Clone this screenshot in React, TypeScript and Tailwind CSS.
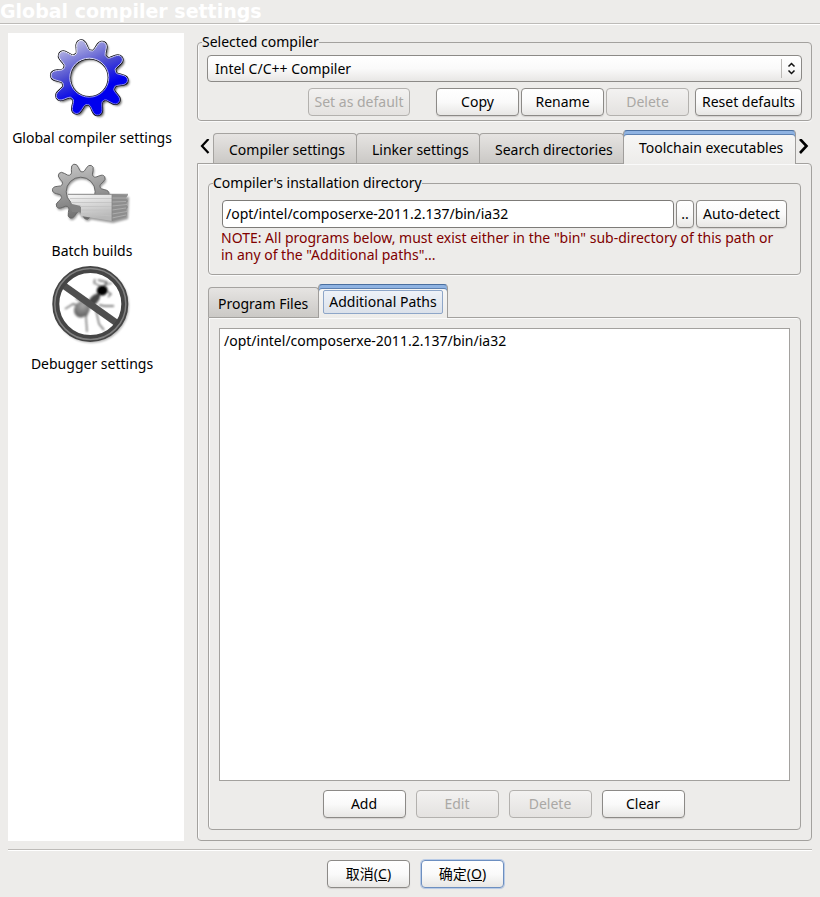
import { useState } from "react";
import type { ReactNode } from "react";
import clsx from "clsx";

// Builds a closed gear outline with rounded teeth
const gearPath = (cx: number, cy: number, outer: number, root: number, teeth: number, offset: number) => {
  const pts: [number, number][] = [];
  const step = 360 / teeth;
  for (let i = 0; i < teeth; i++) {
    const base = offset + i * step;
    const shape = [
      [-0.5, root],
      [-0.34, root],
      [-0.17, outer + 1],
      [0.17, outer + 1],
      [0.34, root],
    ];
    shape.forEach(([f, r]) => {
      const a = ((base + f * step) * Math.PI) / 180;
      pts.push([cx + r * Math.cos(a), cy + r * Math.sin(a)]);
    });
  }
  const mid = (a: [number, number], b: [number, number]) =>
    `${((a[0] + b[0]) / 2).toFixed(2)} ${((a[1] + b[1]) / 2).toFixed(2)}`;
  let d = `M${mid(pts[pts.length - 1], pts[0])}`;
  pts.forEach((p, i) => {
    d += `Q${p[0].toFixed(2)} ${p[1].toFixed(2)} ${mid(p, pts[(i + 1) % pts.length])}`;
  });
  return d + "Z";
};

const hole = (cx: number, cy: number, r: number) =>
  `M${cx - r} ${cy}a${r} ${r} 0 1 0 ${2 * r} 0a${r} ${r} 0 1 0 ${-2 * r} 0Z`;

const BLUE_GEAR = gearPath(37.3, 40.7, 37.5, 27, 10, 4) + hole(37.3, 40.7, 19.5);
const GREY_GEAR = gearPath(28.7, 41.7, 27.5, 20, 10, 4) + hole(28.7, 41.7, 14.5);

const GearIcon = () => (
  <svg className="size-20 overflow-visible" viewBox="0 0 80 80" aria-hidden="true">
    <defs>
      <linearGradient id="blueGear" x1="0.25" y1="0.05" x2="0.6" y2="0.85">
        <stop offset="0" stopColor="#b9b9e4" />
        <stop offset="0.45" stopColor="#4c4cd0" />
        <stop offset="0.8" stopColor="#0000ee" />
      </linearGradient>
      <linearGradient id="gearRim" x1="0.2" y1="0" x2="0.7" y2="1">
        <stop offset="0" stopColor="#ffffff" />
        <stop offset="0.5" stopColor="#c6c6f4" />
        <stop offset="1" stopColor="#5a5af2" />
      </linearGradient>
      <filter id="gearShadow" x="-20%" y="-20%" width="140%" height="140%">
        <feGaussianBlur stdDeviation="1.3" />
      </filter>
    </defs>
    <path d={BLUE_GEAR} fillRule="evenodd" fill="#000" opacity="0.6" filter="url(#gearShadow)" transform="translate(2 2)" />
    <path d={BLUE_GEAR} fillRule="evenodd" fill="none" stroke="#101018" strokeWidth="2.4" />
    <path d={BLUE_GEAR} fillRule="evenodd" fill="url(#blueGear)" stroke="url(#gearRim)" strokeWidth="1" />
  </svg>
);

const BatchIcon = () => (
  <svg className="size-20 overflow-visible" viewBox="0 0 80 80" aria-hidden="true">
    <defs>
      <linearGradient id="greyGear" x1="0.3" y1="0" x2="0.5" y2="1">
        <stop offset="0" stopColor="#c4c4c4" />
        <stop offset="0.5" stopColor="#9a9a9a" />
        <stop offset="1" stopColor="#6c6c6c" />
      </linearGradient>
      <linearGradient id="pageFront" x1="0" y1="0" x2="0.3" y2="1">
        <stop offset="0" stopColor="#f6f6f6" />
        <stop offset="1" stopColor="#b8b8b8" />
      </linearGradient>
      <filter id="batchShadow" x="-20%" y="-20%" width="140%" height="140%">
        <feGaussianBlur stdDeviation="1.2" />
      </filter>
    </defs>
    <g opacity="0.4" filter="url(#batchShadow)" transform="translate(1 2)">
      <path d={GREY_GEAR} fillRule="evenodd" />
      <path d="M17 45h59l-1 22-15 4-31-5z" />
    </g>
    <path d={GREY_GEAR} fillRule="evenodd" fill="url(#greyGear)" stroke="#686868" strokeWidth="1" />
    <path d="M17 51H32V62H20Z" fill="#828282" />
    <path d="M16 44.300H60V71L29 66V56L20 54Z" fill="url(#pageFront)" />
    <path d="M18 48.500H60M19 52.500H60M28 56.500H60M29 60H60M29 63.500L60 66" stroke="#c2c2c2" strokeWidth="0.8" />
    <path d="M60 44.300L76 45L74 48L76 51L74 54L76 57L74 60L75 63L74 67L60 71Z" fill="#8e8e8e" />
    <path d="M60 48L75 48M60 52L74 51.500M60 56L75 54.500M60 60L74 58M60 64L75 61.500M60 68L74 65" stroke="#b4b4b4" strokeWidth="0.8" />
    <path d="M16 44.300H76" stroke="#858585" strokeWidth="1" />
    <path d="M60 45V71" stroke="#858585" strokeWidth="0.8" />
  </svg>
);

const DebuggerIcon = () => (
  <svg className="size-20 overflow-visible" viewBox="0 0 80 80" aria-hidden="true">
    <defs>
      <radialGradient id="abdomen" cx="0.4" cy="0.3" r="0.8">
        <stop offset="0" stopColor="#aaa" />
        <stop offset="1" stopColor="#555" />
      </radialGradient>
      <filter id="antSoft" x="-20%" y="-20%" width="140%" height="140%">
        <feGaussianBlur stdDeviation="0.8" />
      </filter>
      <filter id="ringSoft" x="-20%" y="-20%" width="140%" height="140%">
        <feGaussianBlur stdDeviation="0.6" />
      </filter>
    </defs>
    <circle cx="39.500" cy="42.500" r="37.500" fill="#000" opacity="0.3" filter="url(#antSoft)" />
    <circle cx="38.300" cy="41" r="35" fill="#fff" />
    <g filter="url(#antSoft)">
      <path
        d="M36 41L30 37L24 36M30 43L21 41L13 46M37 45L34 54L35 69M44 47L47 61L52 67M47 42L53 43L62 43M50 24L42 20L43 16M52 23L55 19L46 17M55 28L59 31L56 34M53 22L60 20"
        fill="none"
        stroke="#606060"
        strokeWidth="1.300"
      />
      <ellipse cx="30" cy="46" rx="7.500" ry="9" transform="rotate(35 30 46)" fill="url(#abdomen)" />
      <ellipse cx="42" cy="37" rx="4" ry="8" transform="rotate(42 42 37)" fill="#444" />
      <ellipse cx="50" cy="27.500" rx="5.500" ry="5" transform="rotate(-20 50 27)" fill="#000" />
    </g>
    <g filter="url(#ringSoft)">
      <path d="M11 22L66 61" stroke="#505050" strokeWidth="7" />
      <circle cx="38.300" cy="41" r="34.500" fill="none" stroke="#444" strokeWidth="7" />
      <circle cx="38.300" cy="41" r="35.500" fill="none" stroke="#808080" strokeWidth="1.500" />
    </g>
  </svg>
);

interface PushButtonProps {
  children: ReactNode;
  className?: string;
  disabled?: boolean;
  primary?: boolean;
}

const PushButton = ({ children, className, disabled, primary }: PushButtonProps) => (
  <button
    type="button"
    disabled={disabled}
    className={clsx(
      "h-7 shrink-0 rounded border whitespace-nowrap",
      disabled
        ? "border-[#b3b1ae] bg-linear-to-b from-[#f3f2f1] to-[#e4e2e0] text-[#aaa8a5]"
        : "bg-linear-to-b from-white via-[#fafafa] to-[#e8e7e5] text-black shadow-[0_1px_1px_#d4d2d0]",
      !disabled && (primary ? "border-[#6d8fc0] ring-1 ring-[#b9cbe6]" : "border-[#8c8a87]"),
      className ?? "w-[83px]"
    )}
  >
    {children}
  </button>
);

interface TabProps {
  label: string;
  active: boolean;
  focused?: boolean;
  className: string;
  onClick: () => void;
}

const Tab = ({ label, active, focused, className, onClick }: TabProps) => (
  <button
    type="button"
    role="tab"
    aria-selected={active}
    onClick={onClick}
    className={clsx(
      "-mr-px flex shrink-0 items-center rounded-t border border-b-0 whitespace-nowrap",
      active
        ? "z-10 h-[34px] border-[#9f9d9b] border-t-[#4a6f9f] bg-linear-to-b from-[#f8f8f7] to-[#edecea] shadow-[inset_0_3px_0_#8fb3e2,inset_0_4px_0_#5c80b0]"
        : "mb-px h-[30px] border-[#a5a3a0] bg-linear-to-b from-[#e6e4e2] to-[#cbc9c6] pt-0.5",
      className
    )}
  >
    {focused ? (
      <span className="rounded-xs border border-[#8ea6c8] bg-linear-to-b from-[#eef2f8] to-[#dbe1ea] px-[5px] py-0.5">
        {label}
      </span>
    ) : (
      label
    )}
  </button>
);

const sections = [
  { label: "Global compiler settings", icon: <GearIcon /> },
  { label: "Batch builds", icon: <BatchIcon /> },
  { label: "Debugger settings", icon: <DebuggerIcon /> },
];

const compilerTabs = ["Compiler settings", "Linker settings", "Search directories", "Toolchain executables"];
const tabWidths = ["w-36", "w-[124px]", "w-[145px]", "w-[173px]"];

const group = "min-w-0 rounded border border-[#a3a19e] px-1 shadow-[inset_1px_0_0_#fafafa,0_1px_0_#fafafa]";
const pane = "flex flex-1 flex-col rounded-b rounded-tr border border-[#a3a19e] p-2.5 shadow-[inset_1px_1px_0_#fafafa]";

const App = () => {
  const [tab, setTab] = useState(3);
  const [subTab, setSubTab] = useState(1);
  const [path, setPath] = useState("/opt/intel/composerxe-2011.2.137/bin/ia32");

  return (
    <div className="flex min-h-screen flex-col bg-[#edecea] font-['Noto_Sans','Noto_Sans_CJK_SC',sans-serif] text-[14px] leading-[18px] text-black">
      <header className="h-6 border-b border-[#bdbbb8] shadow-[0_1px_0_white]">
        <h1 className="font-['DejaVu_Sans',sans-serif] text-[19px] leading-[22px] font-bold text-white">
          Global compiler settings
        </h1>
      </header>

      <div className="flex flex-1 gap-[13px] px-2 pt-[9px] pb-2">
        <nav className="flex w-44 shrink-0 flex-col gap-[3px] bg-white pt-1 pr-2">
          {sections.map((s) => (
            <button key={s.label} type="button" className="flex flex-col items-center gap-3 whitespace-nowrap">
              {s.icon}
              <span>{s.label}</span>
            </button>
          ))}
        </nav>

        <main className="flex min-w-0 flex-1 flex-col">
          <fieldset className={group}>
            <legend>Selected compiler</legend>
            <div className="px-[5px] pt-1 pb-1">
              <div className="relative">
                <select
                  aria-label="Selected compiler"
                  className="h-[27px] w-full appearance-none rounded border border-[#8c8a87] bg-linear-to-b from-white via-[#fafafa] to-[#e8e7e5] px-[7px]"
                >
                  <option>Intel C/C++ Compiler</option>
                </select>
                <svg
                  className="pointer-events-none absolute top-1 right-0 h-5 w-[21px]"
                  viewBox="0 0 21 20"
                  fill="none"
                  aria-hidden="true"
                >
                  <path d="M0.500 0V19" stroke="#bbb9b6" />
                  <path d="M7.500 7.500L10.500 4.500L13.500 7.500M7.500 11.500L10.500 14.500L13.500 11.500" stroke="#111" strokeWidth="1.500" />
                </svg>
              </div>
              <div className="mt-1.5 flex justify-end gap-0.5">
                <PushButton className="mr-6 w-[102px]" disabled>
                  Set as default
                </PushButton>
                <PushButton>Copy</PushButton>
                <PushButton>Rename</PushButton>
                <PushButton disabled>Delete</PushButton>
                <PushButton className="ml-1 w-[107px]">Reset defaults</PushButton>
              </div>
            </div>
          </fieldset>

          <div className="relative z-10 mt-[9px] -mb-px flex items-end">
            <button type="button" aria-label="Previous tab" className="h-[34px] w-4 shrink-0">
              <svg className="size-4" viewBox="0 0 16 16" fill="none" aria-hidden="true">
                <path d="M11.500 0L5 7L11.500 14" stroke="#000" strokeWidth="2.200" />
              </svg>
            </button>
            <div role="tablist" className="flex items-end">
              {compilerTabs.map((label, i) => (
                <Tab
                  key={label}
                  label={label}
                  active={tab === i}
                  className={clsx("pl-[15px]", tabWidths[i])}
                  onClick={() => setTab(i)}
                />
              ))}
            </div>
            <button type="button" aria-label="Next tab" className="h-[34px] w-4 shrink-0">
              <svg className="size-4" viewBox="0 0 16 16" fill="none" aria-hidden="true">
                <path d="M5 0L11.500 7L5 14" stroke="#000" strokeWidth="2.600" />
              </svg>
            </button>
          </div>

          <section className={pane}>
            <fieldset className={group}>
              <legend>Compiler&apos;s installation directory</legend>
              <div className="px-2 pt-2 pb-2.5">
                <div className="flex gap-0.5 px-px">
                  <input
                    type="text"
                    aria-label="Compiler's installation directory"
                    value={path}
                    onChange={(e) => setPath(e.target.value)}
                    className="h-7 min-w-0 flex-1 rounded border border-[#7d7b78] bg-white px-[3px] pb-0.5"
                  />
                  <PushButton className="w-[18px]">..</PushButton>
                  <PushButton className="w-[91px]">Auto-detect</PushButton>
                </div>
                <p className="pt-px pb-px leading-[17px] text-[#800000]">
                  NOTE: All programs below, must exist either in the "bin" sub-directory of this path or in any of the
                  "Additional paths"...
                </p>
              </div>
            </fieldset>

            <div role="tablist" className="relative z-10 mt-[9px] -mb-px flex items-end">
              <Tab
                label="Program Files"
                active={subTab === 0}
                className="w-[111px] pl-[9px]"
                onClick={() => setSubTab(0)}
              />
              <Tab
                label="Additional Paths"
                active={subTab === 1}
                focused={subTab === 1}
                className="w-[130px] justify-center"
                onClick={() => setSubTab(1)}
              />
            </div>

            <div className={pane}>
              <ul role="listbox" aria-label="Additional paths" className="flex-1 border border-[#a3a19e] bg-white px-1 py-[3px]">
                <li role="option" aria-selected={false}>
                  {path}
                </li>
              </ul>
              <div className="mt-[9px] mb-px flex justify-center gap-2.5 pr-0.5">
                <PushButton>Add</PushButton>
                <PushButton disabled>Edit</PushButton>
                <PushButton disabled>Delete</PushButton>
                <PushButton>Clear</PushButton>
              </div>
            </div>
          </section>
        </main>
      </div>

      <footer className="mx-2 flex justify-center gap-[11px] border-t border-[#bdbbb8] pt-2.5 pb-[9px] pl-[11px] shadow-[inset_0_1px_0_white]">
        <PushButton>
          取消(<u>C</u>)
        </PushButton>
        <PushButton primary>
          确定(<u>O</u>)
        </PushButton>
      </footer>
    </div>
  );
};

export default App;
